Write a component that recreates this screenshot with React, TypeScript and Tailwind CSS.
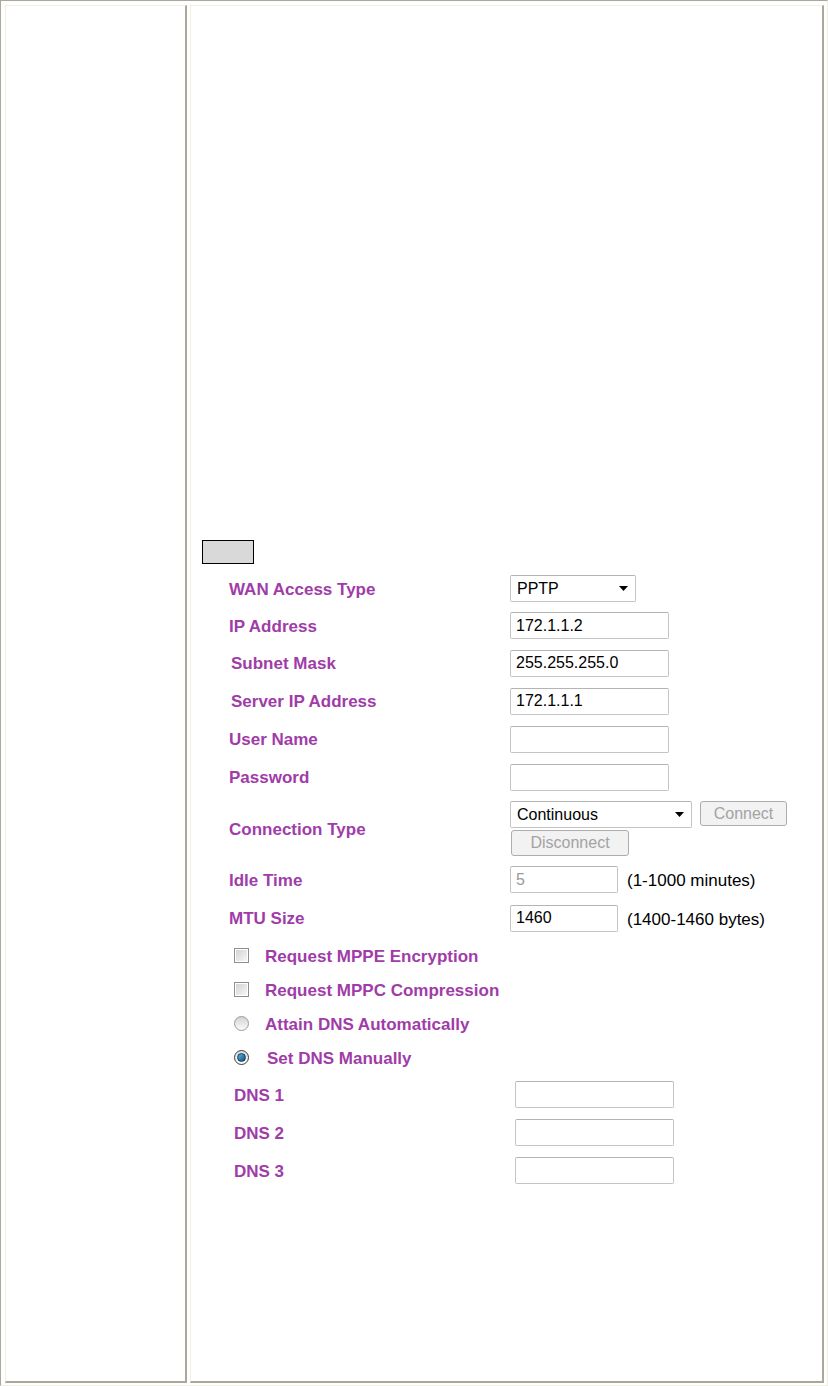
import React from "react";

const LABEL = "font-bold text-[17px] text-[#a03ca8] leading-none whitespace-nowrap relative top-[1px]";
const FONT = { fontFamily: '"Liberation Sans", Arial, sans-serif' };

function TextBox({ value = "", w = 159, gray = false }: { value?: string; w?: number; gray?: boolean }) {
  return (
    <div
      className={`h-[27px] border border-[#c4c4c4] border-t-[#b4b4b4] rounded-[2px] bg-white flex items-center pl-[5px] text-[16px] leading-none ${gray ? "text-[#9a9a9a]" : "text-black"}`}
      style={{ width: w }}
    >
      {value}
    </div>
  );
}

function Select({ value, w }: { value: string; w: number }) {
  return (
    <div
      className="h-[27px] border border-[#c4c4c4] border-t-[#b4b4b4] rounded-[2px] bg-white flex items-center justify-between pl-[6px] pr-[7px] text-[16px] leading-none text-black"
      style={{ width: w }}
    >
      <span>{value}</span>
      <svg width="9" height="5" viewBox="0 0 9 5">
        <path d="M0 0 L9 0 L4.5 5 Z" fill="#000" />
      </svg>
    </div>
  );
}

function Btn({ label, w, h }: { label: string; w: number; h: number }) {
  return (
    <div
      className="border border-[#adadad] rounded-[3px] bg-[#f2f2f2] flex items-center justify-center text-[16px] leading-none text-[#a3a3a3]"
      style={{ width: w, height: h }}
    >
      {label}
    </div>
  );
}

function Checkbox() {
  return (
    <div className="w-[15px] h-[15px] border border-[#8e8e8e] bg-white p-[1px]">
      <div className="w-full h-full bg-gradient-to-br from-[#d3d3d3] to-[#f7f7f7]" />
    </div>
  );
}

function Radio({ checked = false }: { checked?: boolean }) {
  if (checked) {
    return (
      <div className="w-[15px] h-[15px] rounded-full border border-[#3c3c3c] bg-gradient-to-b from-[#dcdcdc] to-[#ffffff] flex items-center justify-center">
        <div className="w-[9px] h-[9px] rounded-full bg-gradient-to-br from-[#5fb4e4] to-[#134f80] border border-[#0f3a5c]" />
      </div>
    );
  }
  return (
    <div className="w-[15px] h-[15px] rounded-full border border-[#9a9a9a] bg-gradient-to-b from-[#d4d4d4] to-[#fbfbfb]" />
  );
}

function Row({ h, label, labelOffset = 0, children, labelW = 281 }: { h: number; label: string; labelOffset?: number; children?: React.ReactNode; labelW?: number }) {
  return (
    <div className="flex items-center" style={{ height: h }}>
      <div className="shrink-0" style={{ width: labelW }}>
        <span className={LABEL} style={{ marginLeft: labelOffset }}>{label}</span>
      </div>
      <div className="flex items-center">{children}</div>
    </div>
  );
}

function CheckRow({ h, label, children, gap = 16 }: { h: number; label: string; children: React.ReactNode; gap?: number }) {
  return (
    <div className="flex items-center pl-[5px]" style={{ height: h }}>
      {children}
      <span className={LABEL} style={{ marginLeft: gap }}>{label}</span>
    </div>
  );
}

export default function App() {
  return (
    <div className="w-[828px] h-[1386px] bg-white" style={FONT}>
      <div className="w-[828px] h-[1386px] flex gap-[3px] border border-t-[#aca899] border-l-[#aca899] border-r-[#f1efe2] border-b-[#f1efe2] pt-[4px] pl-[4px] pr-[3px] pb-[2px]">
        <div className="w-[182px] h-full border-t border-l border-t-[#f1efe2] border-l-[#f1efe2] border-r-2 border-b-2 border-r-[#aca899] border-b-[#aca899]" />
        <div className="flex-1 h-full border-t border-l border-t-[#f1efe2] border-l-[#f1efe2] border-r-2 border-b-2 border-r-[#aca899] border-b-[#aca899] pt-[534px] pl-[11px]">
          <div className="w-[52px] h-[24px] border border-black bg-[#d9d9d9]" />
          <div className="mt-[6px] pl-[27px] flex flex-col">
            <Row h={37} label="WAN Access Type"><Select value="PPTP" w={126} /></Row>
            <Row h={37} label="IP Address"><TextBox value="172.1.1.2" /></Row>
            <Row h={38} label="Subnet Mask" labelOffset={2}><TextBox value="255.255.255.0" /></Row>
            <Row h={38} label="Server IP Address" labelOffset={2}><TextBox value="172.1.1.1" /></Row>
            <Row h={38} label="User Name"><TextBox /></Row>
            <Row h={38} label="Password"><TextBox /></Row>
            <div className="flex items-center h-[65px]">
              <div className="w-[281px] shrink-0"><span className={LABEL}>Connection Type</span></div>
              <div className="flex flex-col gap-[2px]">
                <div className="flex items-start gap-[8px]">
                  <Select value="Continuous" w={182} />
                  <Btn label="Connect" w={87} h={25} />
                </div>
                <div className="pl-[1px]"><Btn label="Disconnect" w={118} h={26} /></div>
              </div>
            </div>
            <Row h={37} label="Idle Time">
              <TextBox value="5" w={108} gray />
              <span className="ml-[9px] text-[17px] leading-none text-black relative top-[1px]">(1-1000 minutes)</span>
            </Row>
            <Row h={40} label="MTU Size">
              <TextBox value="1460" w={108} />
              <span className="ml-[9px] text-[17px] leading-none text-black relative top-[1px]">(1400-1460 bytes)</span>
            </Row>
            <CheckRow h={34} label="Request MPPE Encryption"><Checkbox /></CheckRow>
            <CheckRow h={34} label="Request MPPC Compression"><Checkbox /></CheckRow>
            <CheckRow h={34} label="Attain DNS Automatically"><Radio /></CheckRow>
            <CheckRow h={35} label="Set DNS Manually" gap={18}><Radio checked /></CheckRow>
            <div className="pl-[5px] flex flex-col">
              <Row h={39} label="DNS 1"><TextBox /></Row>
              <Row h={37} label="DNS 2"><TextBox /></Row>
              <Row h={39} label="DNS 3"><TextBox /></Row>
            </div>
          </div>
        </div>
      </div>
    </div>
  );
}
